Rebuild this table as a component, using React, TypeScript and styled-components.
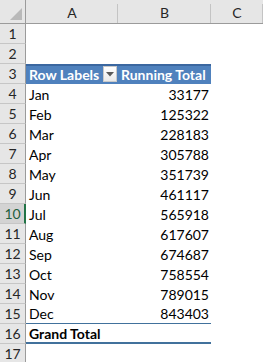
import React from 'react';
import styled, { createGlobalStyle, css } from 'styled-components';

const Global = createGlobalStyle`
  html, body { margin: 0; padding: 0; background: #ffffff; }
  body { overflow: hidden; font-family: Lato, "Open Sans", sans-serif; }
`;

const Sheet = styled.div`
  display: grid;
  grid-template-columns: 26px 92px 93px 1fr;
  grid-template-rows: 24px;
  grid-auto-rows: 20px;
  width: 263px;
  height: 362px;
  overflow: hidden;
  font-family: Lato, "Open Sans", sans-serif;
  font-size: 14px;
  color: #000000;
  background: #ffffff;
`;

const Corner = styled.div`
  background: #e6e6e6;
  border-right: 1px solid #9b9b9b;
  border-bottom: 1px solid #9b9b9b;
  display: flex;
  align-items: flex-end;
  justify-content: flex-end;
  padding: 0 3px 3px 0;
`;

const ColHead = styled.div`
  background: linear-gradient(#c4c4c4, #c4c4c4) right 4px / 1px calc(100% - 4px) no-repeat, #e6e6e6;
  border-bottom: 1px solid #9b9b9b;
  display: flex;
  align-items: center;
  justify-content: center;
  line-height: 23px;
  color: #262626;
  font-size: 14px;
  padding-top: 1px;
`;

const RowHead = styled.div<{ $active?: boolean }>`
  background: #e6e6e6;
  border-right: 1px solid #9b9b9b;
  border-bottom: 1px solid #c6c6c6;
  display: flex;
  align-items: center;
  justify-content: center;
  color: #262626;
  font-size: 14px;
  ${(p) =>
    p.$active &&
    css`
      background: #d3d3d3;
      border-right: 2px solid #217346;
      color: #1d5e3d;
      padding-left: 1px;
    `}
`;

type Variant = 'plain' | 'head' | 'last' | 'total';

const Cell = styled.div<{ $variant?: Variant; $right?: boolean }>`
  display: flex;
  align-items: center;
  justify-content: ${(p) => (p.$right ? 'flex-end' : 'flex-start')};
  padding: 0 2px 0 3px;
  white-space: nowrap;
  overflow: hidden;
  ${(p) =>
    p.$variant === 'head' &&
    css`
      background: #4f81bd;
      color: #ffffff;
      font-weight: 700;
      box-shadow: inset 0 2px 0 #3b67a0;
      gap: 4px;
    `}
  ${(p) =>
    p.$variant === 'last' &&
    css`
      border-bottom: 1px solid #41719c;
    `}
  ${(p) =>
    p.$variant === 'total' &&
    css`
      font-weight: 700;
      border-bottom: 2px solid #41719c;
    `}
`;

const Label = styled.span`
  flex: 1;
`;

const FilterButton = styled.span`
  width: 16px;
  height: 16px;
  box-sizing: border-box;
  border: 1px solid #c9c9c9;
  background: linear-gradient(#ffffff, #e9e9e9);
  display: flex;
  align-items: center;
  justify-content: center;
  margin-right: -1px;
`;

const months: [string, number][] = [
  ['Jan', 33177],
  ['Feb', 125322],
  ['Mar', 228183],
  ['Apr', 305788],
  ['May', 351739],
  ['Jun', 461117],
  ['Jul', 565918],
  ['Aug', 617607],
  ['Sep', 674687],
  ['Oct', 758554],
  ['Nov', 789015],
  ['Dec', 843403],
];

export default function App() {
  return (
    <>
      <Global />
      <Sheet>
        <Corner>
          <svg width="12" height="12" viewBox="0 0 12 12">
            <polygon points="12,0 12,12 0,12" fill="#b9b9b9" />
          </svg>
        </Corner>
        <ColHead>A</ColHead>
        <ColHead>B</ColHead>
        <ColHead>C</ColHead>

        <RowHead>1</RowHead>
        <Cell />
        <Cell />
        <Cell />

        <RowHead>2</RowHead>
        <Cell />
        <Cell />
        <Cell />

        <RowHead>3</RowHead>
        <Cell $variant="head">
          <Label>Row Labels</Label>
          <FilterButton>
            <svg width="8" height="5" viewBox="0 0 8 5">
              <polygon points="0,0 8,0 4,4.5" fill="#595959" />
            </svg>
          </FilterButton>
        </Cell>
        <Cell $variant="head">Running Total</Cell>
        <Cell />

        {months.map(([m, v], i) => {
          const row = i + 4;
          const variant: Variant = i === months.length - 1 ? 'last' : 'plain';
          return (
            <React.Fragment key={m}>
              <RowHead $active={row === 10}>{row}</RowHead>
              <Cell $variant={variant}>{m}</Cell>
              <Cell $variant={variant} $right>
                {v}
              </Cell>
              <Cell />
            </React.Fragment>
          );
        })}

        <RowHead>16</RowHead>
        <Cell $variant="total">Grand Total</Cell>
        <Cell $variant="total" />
        <Cell />

        <RowHead>17</RowHead>
        <Cell />
        <Cell />
        <Cell />
      </Sheet>
    </>
  );
}
